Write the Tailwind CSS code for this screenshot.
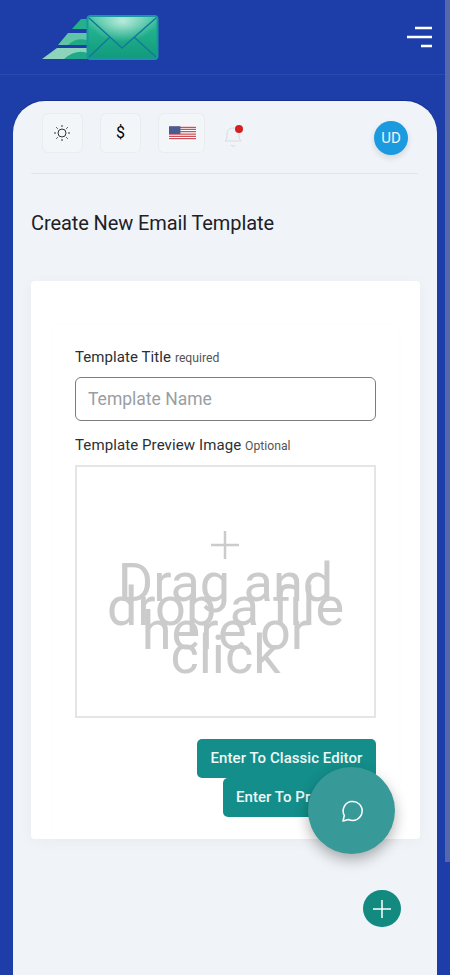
<!DOCTYPE html>
<html>
<head>
<meta charset="utf-8">
<script src="https://cdn.jsdelivr.net/npm/@tailwindcss/browser@4"></script>
</head>
<body class="m-0 overflow-hidden">
<div class="relative h-[975px] w-[450px] overflow-hidden bg-[#1d3ea8] font-['Roboto',sans-serif]">
  <header class="flex h-[75px] items-center justify-between border-b border-[#2a4aae] pl-[42px] pr-[17px]">
    <svg width="117" height="47" viewBox="0 0 117 47" class="mt-[2px]">
      <defs>
        <linearGradient id="g" x1="0" y1="0" x2="0" y2="1"><stop offset="0" stop-color="#4fc9a8"/><stop offset=".35" stop-color="#20b08c"/><stop offset="1" stop-color="#119a7c"/></linearGradient>
        <radialGradient id="h" cx=".5" cy=".1" r=".5"><stop offset="0" stop-color="#d8f5ea" stop-opacity=".8"/><stop offset="1" stop-color="#d8f5ea" stop-opacity="0"/></radialGradient>
      </defs>
      <path d="M30 14 L39 4 H45 V14Z" fill="#25b08d"/>
      <path d="M16 30 L26 18 H45 V30Z" fill="#5fc5a6"/>
      <path d="M26 30 Q34 22 45 25 V30Z" fill="#1fa988"/>
      <path d="M0 44 L15 33 H45 V44Z" fill="#8ed4bd"/>
      <path d="M22 44 Q34 34 45 38 V44Z" fill="#1fa988"/>
      <rect x="45.500" y="1" width="70" height="43" rx="3" fill="url(#g)" stroke="#1a96a0" stroke-width="2"/>
      <rect x="47" y="2" width="67" height="41" fill="url(#h)"/>
      <path d="M47 3 L80 33 L114 3 M47 42 L68 22 M114 42 L92 22" fill="none" stroke="#13799a" stroke-width="1.500"/>
    </svg>
    <svg width="27" height="22" viewBox="0 0 27 22" fill="none" stroke="#fff" stroke-width="2.500">
      <path d="M9 2H26M1 11H26M15 20H26"/>
    </svg>
  </header>

  <main class="absolute left-[13px] top-[101px] h-[900px] w-[424px] rounded-t-[32px] bg-[#f0f4f8] px-[18px] shadow-[0_-1px_0_#15308f]">
    <div class="mr-[1px] flex h-[73px] w-[387px] items-start border-b border-[#e3e7ea] pt-[12px]">
      <div class="ml-[11px] flex h-[40px] w-[41px] items-center justify-center rounded-md border border-[#e9edf0] bg-[#f3f6f9]">
        <svg width="18" height="18" viewBox="0 0 18 18" fill="none" stroke="#333" stroke-width="1" class="-ml-[1px]">
          <circle cx="9" cy="9" r="4"/>
          <path d="M9 1v2M9 15v2M1 9h2M15 9h2M3.300 3.300l1.400 1.400M13.300 13.300l1.400 1.400M3.300 14.700l1.400-1.400M13.300 4.700l1.400-1.400"/>
        </svg>
      </div>
      <div class="ml-[17px] flex h-[40px] w-[41px] items-center justify-center rounded-md border border-[#e9edf0] bg-[#f3f6f9] text-[16px] text-black">$</div>
      <div class="ml-[17px] flex h-[40px] w-[47px] items-center justify-center rounded-md border border-[#e9edf0] bg-[#f3f6f9]">
        <svg width="27" height="15" viewBox="0 0 26 14" class="ml-[1px]">
          <rect width="26" height="14" fill="#fff"/>
          <path d="M0 1h26M0 3.100h26M0 5.300h26M0 7.500h26M0 9.700h26M0 11.900h26" stroke="#c9515b" stroke-width="1.200"/>
          <rect width="11" height="7.500" fill="#4a5c8f"/>
        </svg>
      </div>
      <div class="relative ml-[18px] mt-[12px] h-[24px] w-[22px]">
        <svg width="20" height="23" viewBox="0 0 20 23" fill="none" stroke="#d9d9d9" stroke-width="1">
          <path d="M2 16c2-2 2-4 2-7 0-3.500 2.500-6 6-6s6 2.500 6 6c0 3 0 5 2 7ZM8 20l2 1.500L12 20"/>
        </svg>
        <span class="absolute left-[12px] top-[0px] h-[8px] w-[8px] rounded-full bg-[#d42020]"></span>
      </div>
      <div class="ml-auto mr-[10px] mt-[8px] flex h-[34px] w-[34px] items-center justify-center rounded-full bg-[#1b9ae0] text-[15px] font-normal text-[#f0f4f8] shadow-[0_3px_6px_rgba(0,0,0,0.12)]">UD</div>
    </div>

    <h1 class="mt-[37px] text-[20px] leading-[24px] font-normal tracking-[-0.1px] text-[#1c2128]">Create New Email Template</h1>

    <section class="mt-[46px] h-[558px] w-[389px] rounded-[4px] bg-white pl-[21px] pt-[44px] shadow-[0_2px_14px_rgba(0,0,0,0.04)]">
      <div class="h-[514px] w-[347px] pl-[23px] pt-[23px] shadow-[0_0_8px_rgba(0,0,0,0.012)]">
        <label class="block h-[18px] text-[15px] leading-[18px] tracking-[0.08px] text-[#2a2f36]">Template Title <span class="text-[12.200px] tracking-normal text-[#555]">required</span></label>
        <div class="mt-[11px] flex h-[44px] w-[301px] items-center rounded-[6px] border border-[#7d7d7d] pl-[12px] text-[17.500px] text-[#9a9ea3]">Template Name</div>
        <label class="mt-[15px] block h-[18px] text-[15px] leading-[18px] tracking-[0.1px] text-[#2a2f36]">Template Preview Image <span class="text-[12.200px] tracking-normal text-[#555]">Optional</span></label>
        <div class="relative mt-[11px] flex h-[253px] w-[301px] flex-col items-center border-2 border-[#e5e5e5] text-[#cbcbcb]">
          <svg width="30" height="30" viewBox="0 0 30 30" stroke="#cbcbcb" stroke-width="2.500" class="mt-[63px] -ml-[2px]"><path d="M15 1V29M1 15H29"/></svg>
          <div class="mt-[5px] w-[260px] pt-[6px] text-center text-[54px] leading-[24px]">Drag and drop a file here or click</div>
        </div>
        <div class="mt-[21px] flex w-[301px] flex-col items-end">
          <div class="flex h-[39px] w-[179px] items-center justify-center rounded-[5px] bg-[#138e8a] text-[15px] font-medium tracking-[0.05px] text-[#eef8f7]">Enter To Classic Editor</div>
          <div class="flex h-[39px] w-[153px] items-center rounded-[5px] bg-[#138e8a] pl-[13px] text-[15px] font-medium tracking-[0.05px] text-[#eef8f7]">Enter To Preview</div>
        </div>
      </div>
    </section>
  </main>

  <div class="absolute left-[308px] top-[767px] flex h-[87px] w-[87px] items-center justify-center rounded-full bg-[#379a98] shadow-[0_6px_14px_rgba(0,0,0,0.3)]">
    <svg width="24" height="24" viewBox="0 0 24 24" fill="none" stroke="#fff" stroke-width="1.500" stroke-linejoin="round">
      <path d="M3 22l1.300-5.500A9.500 9.500 0 1 1 8.500 20.500Z"/>
    </svg>
  </div>
  <div class="absolute left-[363px] top-[890px] flex h-[37px] w-[38px] items-center justify-center rounded-full bg-[#138a80]">
    <svg width="20" height="20" viewBox="0 0 20 20" stroke="#fff" stroke-width="1.500"><path d="M10 1V19M1 10H19"/></svg>
  </div>
  <div class="absolute right-0 top-0 h-[862px] w-[5px] bg-[#5567ad]"></div>
</div>
</body>
</html>
